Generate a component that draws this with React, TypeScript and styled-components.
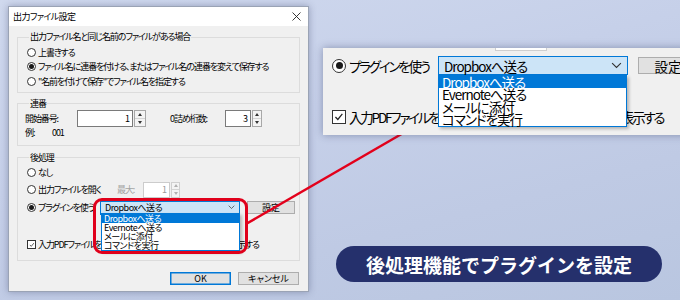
import React from "react";
import styled, { createGlobalStyle } from "styled-components";

const FONT = `"Noto Sans CJK JP", "Noto Sans", sans-serif`;

const GlobalStyle = createGlobalStyle`
  html, body { margin: 0; padding: 0; }
  body { font-family: ${FONT}; color: #000; }
  * { box-sizing: border-box; }
`;

const Stage = styled.div`
  position: relative;
  width: 680px;
  height: 300px;
  overflow: hidden;
  display: flex;
  padding: 6px 0 0 8px;
  font-feature-settings: "palt";
  background: linear-gradient(165deg, #d0d9ee 0%, #c6d0e9 40%, #bfcae4 70%, #b9c6e0 100%);
`;

/* ---------- dialog ---------- */

const Dialog = styled.div`
  position: relative;
  z-index: 1;
  flex: none;
  width: 301px;
  height: 286px;
  display: flex;
  flex-direction: column;
  background: #f0f0f0;
  border: 1px solid #9aa3b5;
  box-shadow: 0 0 7px rgba(40, 50, 90, 0.35);
  font-size: 9px;
  letter-spacing: -1.1px;
`;

const TitleBar = styled.div`
  height: 19px;
  flex: none;
  display: flex;
  align-items: center;
  justify-content: space-between;
  padding: 0 7px 0 4px;
  background: #fff;
  font-size: 9px;
  letter-spacing: -0.6px;
`;

const Body = styled.div`
  flex: 1;
  display: flex;
  flex-direction: column;
  padding: 5px 8px 0 8px;
`;

const Group = styled.fieldset<{ $mt?: number; $pt?: number; $pb?: number }>`
  margin: ${(p) => p.$mt ?? 0}px 0 0 0;
  padding: ${(p) => p.$pt ?? 0}px 6px ${(p) => p.$pb ?? 0}px 7px;
  border: 1px solid #dcdcdc;
  min-width: 0;
  display: flex;
  flex-direction: column;
`;

const Legend = styled.legend`
  margin-left: 4px;
  padding: 0 1px;
  line-height: 12px;
  font-size: 9px;
`;

const Row = styled.div<{ $h: number; $mt?: number }>`
  display: flex;
  align-items: center;
  height: ${(p) => p.$h}px;
  margin-top: ${(p) => p.$mt ?? 0}px;
  white-space: nowrap;
`;

const Option = styled.div<{ $w?: number; $gap: number; $ml?: number }>`
  flex: none;
  display: flex;
  align-items: center;
  gap: ${(p) => p.$gap}px;
  margin-left: ${(p) => p.$ml ?? 0}px;
  width: ${(p) => (p.$w ? `${p.$w}px` : "auto")};
  white-space: nowrap;
`;

const Radio = styled.span<{ $on?: boolean; $size: number }>`
  flex: none;
  width: ${(p) => p.$size}px;
  height: ${(p) => p.$size}px;
  border-radius: 50%;
  border: 1px solid #333;
  background: #fff;
  display: flex;
  align-items: center;
  justify-content: center;

  &::after {
    content: "";
    display: ${(p) => (p.$on ? "block" : "none")};
    width: ${(p) => Math.round(p.$size * 0.5)}px;
    height: ${(p) => Math.round(p.$size * 0.5)}px;
    border-radius: 50%;
    background: #1a1a1a;
  }
`;

const CheckBox = styled.span<{ $size: number }>`
  flex: none;
  width: ${(p) => p.$size}px;
  height: ${(p) => p.$size}px;
  border: 1px solid #333;
  background: #fff;
  display: flex;
  align-items: center;
  justify-content: center;

  svg {
    width: 80%;
    height: 80%;
  }
`;

const Label = styled.span<{ $w?: number; $ml?: number; $muted?: boolean }>`
  flex: none;
  width: ${(p) => (p.$w ? `${p.$w}px` : "auto")};
  margin-left: ${(p) => p.$ml ?? 0}px;
  color: ${(p) => (p.$muted ? "#a3a3a3" : "#000")};
`;

const Field = styled.span<{ $w: number; $h: number; $off?: boolean }>`
  flex: none;
  width: ${(p) => p.$w}px;
  height: ${(p) => p.$h}px;
  display: flex;
  align-items: center;
  justify-content: flex-end;
  padding-right: 3px;
  background: #fff;
  border: 1px solid ${(p) => (p.$off ? "#cccccc" : "#7a7a7a")};
  color: ${(p) => (p.$off ? "#9a9a9a" : "#000")};
  font-size: 9px;
`;

const SpinBox = styled.span<{ $w: number; $h: number; $off?: boolean }>`
  flex: none;
  width: ${(p) => p.$w}px;
  height: ${(p) => p.$h}px;
  margin-left: 1px;
  display: flex;
  flex-direction: column;
  border: 1px solid ${(p) => (p.$off ? "#d0d0d0" : "#a8a8a8")};
  background: #f4f4f4;
`;

const SpinHalf = styled.span<{ $down?: boolean; $off?: boolean }>`
  flex: 1;
  display: flex;
  align-items: center;
  justify-content: center;
  border-top: ${(p) => (p.$down ? "1px solid #d4d4d4" : "none")};

  &::after {
    content: "";
    border-left: 2.5px solid transparent;
    border-right: 2.5px solid transparent;
    ${(p) =>
      p.$down
        ? `border-top: 3px solid ${p.$off ? "#b0b0b0" : "#333"};`
        : `border-bottom: 3px solid ${p.$off ? "#b0b0b0" : "#333"};`}
  }
`;

const Combo = styled.div<{ $w: number; $h: number; $fs: number; $pad: number; $ls: number }>`
  flex: none;
  position: relative;
  width: ${(p) => p.$w}px;
  height: ${(p) => p.$h}px;
  display: flex;
  align-items: center;
  justify-content: space-between;
  padding: 0 ${(p) => p.$pad}px;
  background: #cce4f7;
  border: 1px solid #0078d7;
  font-size: ${(p) => p.$fs}px;
  letter-spacing: ${(p) => p.$ls}px;
`;

const Chevron = styled.svg`
  flex: none;
`;

const Button = styled.div<{ $w: number; $h: number; $primary?: boolean; $ml?: number }>`
  flex: none;
  width: ${(p) => p.$w}px;
  height: ${(p) => p.$h}px;
  margin-left: ${(p) => p.$ml ?? 0}px;
  display: flex;
  align-items: center;
  justify-content: center;
  background: #e1e1e1;
  border: 1px solid ${(p) => (p.$primary ? "#0078d7" : "#adadad")};
  box-shadow: ${(p) => (p.$primary ? "inset 0 0 0 0.5px #0078d7" : "none")};
  letter-spacing: 0;
`;

const ButtonBar = styled.div`
  display: flex;
  justify-content: flex-end;
  gap: 7px;
  margin-top: 11px;
  padding-right: 1px;
`;

const DropList = styled.div<{ $left: number; $top: number; $w: number; $item: number; $fs: number; $ls: number }>`
  position: absolute;
  left: ${(p) => p.$left}px;
  top: ${(p) => p.$top}px;
  width: ${(p) => p.$w}px;
  display: flex;
  flex-direction: column;
  background: #fff;
  border: 1px solid #0078d7;
  box-shadow: 2px 2px 3px rgba(0, 0, 0, 0.25);
  font-size: ${(p) => p.$fs}px;
  line-height: ${(p) => p.$item}px;
  letter-spacing: ${(p) => p.$ls}px;
`;

const DropItem = styled.div<{ $on?: boolean; $pad: number }>`
  padding-left: ${(p) => p.$pad}px;
  white-space: nowrap;
  background: ${(p) => (p.$on ? "#0078d7" : "transparent")};
  color: ${(p) => (p.$on ? "#fff" : "#000")};
`;

const Highlight = styled.div`
  position: absolute;
  left: 84px;
  top: 191px;
  width: 155px;
  height: 56px;
  border: 3px solid #e0001b;
  border-radius: 9px;
`;

/* ---------- right side ---------- */

const Side = styled.div`
  position: relative;
  z-index: 3;
  flex: 1;
  display: flex;
  flex-direction: column;
  padding: 42px 0 0 14px;
`;

const Zoom = styled.div`
  position: relative;
  height: 87px;
  width: 380px;
  display: flex;
  flex-direction: column;
  padding-left: 9px;
  background: #f0f0f0;
  box-shadow: 0 0 8px rgba(40, 50, 90, 0.4);
  font-size: 13.5px;
  letter-spacing: -2.2px;
`;

const ClippedInput = styled.div`
  width: 52px;
  height: 3px;
  margin-left: 163px;
  background: #fff;
  border: 1px solid #cfcfcf;
  border-top: none;
`;

const Caption = styled.div`
  margin: 111px 0 0 13px;
  width: 326px;
  height: 36px;
  border-radius: 18px;
  display: flex;
  align-items: center;
  justify-content: center;
  background: #25306c;
  color: #fff;
  font-size: 19px;
  font-weight: 700;
  letter-spacing: 0;
  font-feature-settings: normal;
`;

const Connector = styled.svg`
  position: absolute;
  left: 0;
  top: 0;
  z-index: 2;
  pointer-events: none;
`;

const Check = () => (
  <svg viewBox="0 0 10 10">
    <path d="M1.5 5.2 L4 7.8 L8.7 2" fill="none" stroke="#222" strokeWidth="1.3" />
  </svg>
);

const Spin = ({ value, w, h, sw, off }: { value: string; w: number; h: number; sw: number; off?: boolean }) => (
  <>
    <Field $w={w} $h={h} $off={off}>{value}</Field>
    <SpinBox $w={sw} $h={h} $off={off}>
      <SpinHalf $off={off} />
      <SpinHalf $down $off={off} />
    </SpinBox>
  </>
);

const ChevronDown = ({ size }: { size: number }) => (
  <Chevron width={size} height={size * 0.6} viewBox="0 0 10 6">
    <path d="M1 1 L5 5 L9 1" fill="none" stroke="#333" strokeWidth="1" />
  </Chevron>
);

const plugins = ["Dropboxへ送る", "Evernoteへ送る", "メールに添付", "コマンドを実行"];

const checkText = "入力PDFファイルを処理後に保存先のフォルダを自動的に表示する";

export default function App() {
  return (
    <>
      <GlobalStyle />
      <Stage>
        <Dialog>
          <TitleBar>
            <span>出力ファイル設定</span>
            <svg width="9" height="9" viewBox="0 0 9 9">
              <path d="M0.5 0.5 L8.5 8.5 M8.5 0.5 L0.5 8.5" stroke="#222" strokeWidth="0.9" />
            </svg>
          </TitleBar>
          <Body>
            <Group $pt={2} $pb={3}>
              <Legend>出力ファイル名と同じ名前のファイルがある場合</Legend>
              <Row $h={14.5}>
                <Option $gap={2} $ml={2}>
                  <Radio $size={9} />
                  上書きする
                </Option>
              </Row>
              <Row $h={14.5}>
                <Option $gap={2} $ml={2}>
                  <Radio $size={9} $on />
                  ファイル名に連番を付ける、またはファイル名の連番を変えて保存する
                </Option>
              </Row>
              <Row $h={14.5}>
                <Option $gap={2} $ml={2}>
                  <Radio $size={9} />
                  "名前を付けて保存"でファイル名を指定する
                </Option>
              </Row>
            </Group>

            <Group $mt={5} $pb={6}>
              <Legend>連番</Legend>
              <Row $h={17}>
                <Label $w={52}>開始番号:</Label>
                <Spin value="1" w={56} h={17} sw={12} />
                <Label $w={55} $ml={24}>
                  0詰め桁数:
                </Label>
                <Spin value="3" w={26} h={17} sw={10} />
              </Row>
              <Row $h={12}>
                <Label $w={27}>例:</Label>
                <span>001</span>
              </Row>
            </Group>

            <Group $mt={6} $pt={2} $pb={8}>
              <Legend>後処理</Legend>
              <Row $h={14}>
                <Option $gap={2} $ml={2}>
                  <Radio $size={9} />
                  なし
                </Option>
              </Row>
              <Row $h={16} $mt={2}>
                <Option $gap={2} $ml={2} $w={90}>
                  <Radio $size={9} />
                  出力ファイルを開く
                </Option>
                <Label $w={26} $muted>
                  最大:
                </Label>
                <Spin value="1" w={27} h={16} sw={9} off />
              </Row>
              <Row $h={16} $mt={2}>
                <Option $gap={2} $ml={2} $w={73}>
                  <Radio $size={9} $on />
                  プラグインを使う
                </Option>
                <Combo $w={140} $h={14} $fs={9} $pad={4} $ls={-0.5}>
                  <span>Dropboxへ送る</span>
                  <ChevronDown size={7} />
                </Combo>
                <Button $w={48} $h={13} $ml={7}>
                  設定
                </Button>
              </Row>
              <Row $h={14} $mt={22}>
                <Option $gap={2} $ml={2}>
                  <CheckBox $size={9}>
                    <Check />
                  </CheckBox>
                  {checkText}
                </Option>
              </Row>
            </Group>

            <ButtonBar>
              <Button $w={61} $h={13} $primary>
                OK
              </Button>
              <Button $w={61} $h={13}>
                キャンセル
              </Button>
            </ButtonBar>
          </Body>

          <DropList $left={92} $top={206} $w={139} $item={9} $fs={9} $ls={-0.5}>
            {plugins.map((p, i) => (
              <DropItem key={p} $on={i === 0} $pad={2}>
                {p}
              </DropItem>
            ))}
          </DropList>
          <Highlight />
        </Dialog>

        <Connector width="680" height="300">
          <line x1="246" y1="224" x2="405" y2="132" stroke="#e3001b" strokeWidth="2.5" />
        </Connector>

        <Side>
          <Zoom>
            <ClippedInput />
            <Row $h={19} $mt={5}>
              <Option $gap={3} $w={106}>
                <Radio $size={14} $on />
                プラグインを使う
              </Option>
              <Combo $w={190} $h={19} $fs={13.5} $pad={5} $ls={-1}>
                <span>Dropboxへ送る</span>
                <ChevronDown size={11} />
              </Combo>
              <Button $w={60} $h={17} $ml={10}>
                設定
              </Button>
            </Row>
            <Row $h={14} $mt={35}>
              <Option $gap={3}>
                <CheckBox $size={14}>
                  <Check />
                </CheckBox>
                {checkText}
              </Option>
            </Row>
            <DropList $left={115} $top={27} $w={189} $item={12.4} $fs={13.5} $ls={-1}>
              {plugins.map((p, i) => (
                <DropItem key={p} $on={i === 0} $pad={3}>
                  {p}
                </DropItem>
              ))}
            </DropList>
          </Zoom>
          <Caption>後処理機能でプラグインを設定</Caption>
        </Side>
      </Stage>
    </>
  );
}
